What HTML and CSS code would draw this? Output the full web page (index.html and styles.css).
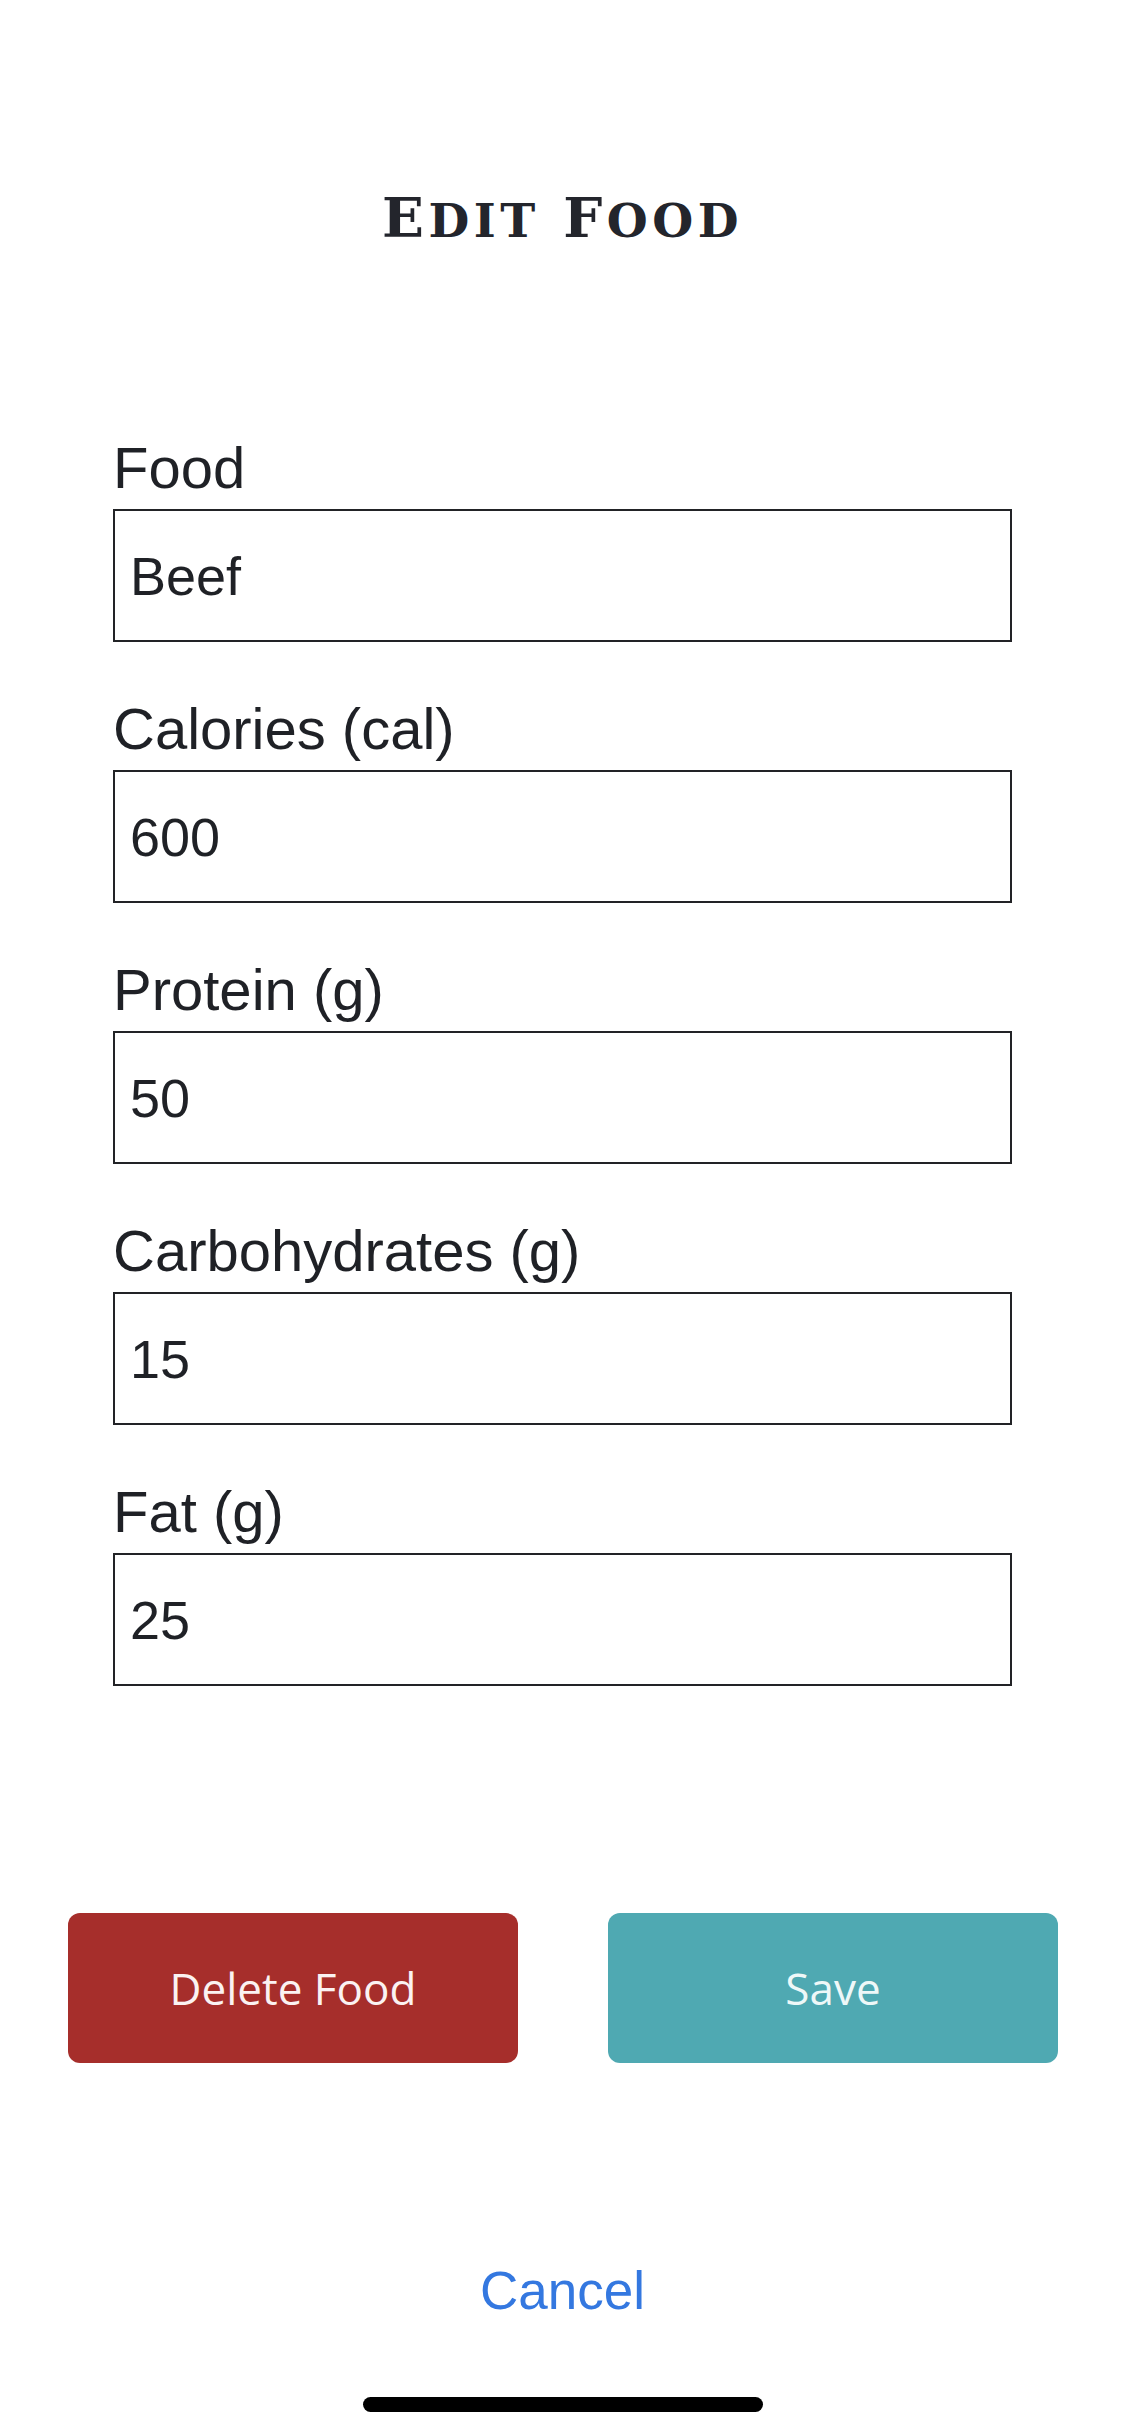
FILE: index.html
```html
<!DOCTYPE html>
<html lang="en">
<head>
<meta charset="utf-8">
<title>Edit Food</title>
<link rel="stylesheet" href="styles.css">
</head>
<body>
<main class="screen">
  <h1 class="title"><span class="cap">E</span><span class="sc">DIT</span> <span class="cap">F</span><span class="sc">OOD</span></h1>

  <form class="form">
    <div class="field">
      <label class="label" for="food">Food</label>
      <input class="input" id="food" type="text" value="Beef">
    </div>
    <div class="field">
      <label class="label" for="cal">Calories (cal)</label>
      <input class="input" id="cal" type="text" value="600">
    </div>
    <div class="field">
      <label class="label" for="protein">Protein (g)</label>
      <input class="input" id="protein" type="text" value="50">
    </div>
    <div class="field">
      <label class="label" for="carbs">Carbohydrates (g)</label>
      <input class="input" id="carbs" type="text" value="15">
    </div>
    <div class="field">
      <label class="label" for="fat">Fat (g)</label>
      <input class="input" id="fat" type="text" value="25">
    </div>
  </form>

  <div class="actions">
    <button class="btn btn-delete" type="button">Delete Food</button>
    <button class="btn btn-save" type="button">Save</button>
  </div>

  <div class="cancel">Cancel</div>

  <div class="home-indicator"></div>
</main>
</body>
</html>
```

FILE: styles.css
```css
html, body {
  margin: 0;
  padding: 0;
  background: #ffffff;
}

.screen {
  width: 1125px;
  height: 2436px;
  display: flex;
  flex-direction: column;
  font-family: "Liberation Sans", Arial, sans-serif;
  color: #1f2126;
  overflow: hidden;
}

.title {
  margin: 188px 0 0 0;
  height: 60px;
  text-align: center;
  font-family: "DejaVu Serif", serif;
  font-weight: bold;
  font-size: 55px;
  line-height: 60px;
  letter-spacing: 4.5px;
  color: #23252c;
}

.title .sc {
  font-size: 47px;
}

.form {
  margin: 188px 113px 0 113px;
  display: flex;
  flex-direction: column;
  gap: 55px;
}

.field {
  display: flex;
  flex-direction: column;
}

.label {
  display: block;
  height: 64px;
  font-size: 58px;
  line-height: 64px;
  margin-bottom: 9px;
  color: #1f2126;
}

.input {
  box-sizing: border-box;
  width: 100%;
  height: 133px;
  margin: 0;
  border: 2px solid #222326;
  border-radius: 0;
  background: #fff;
  padding: 0 15px;
  font-family: "Liberation Sans", Arial, sans-serif;
  font-size: 54px;
  color: #1f2126;
  outline: none;
}

.actions {
  margin: 227px 67px 0 68px;
  display: flex;
  gap: 90px;
}

.btn {
  flex: 1;
  height: 150px;
  border: none;
  border-radius: 12px;
  font-family: "Open Sans", sans-serif;
  font-size: 44px;
  color: #fbf2f2;
  padding: 0;
}

.btn-delete {
  background: #a62e2b;
}

.btn-save {
  background: #4fa9b2;
  color: #eef8f8;
}

.cancel {
  margin-top: 198px;
  height: 60px;
  text-align: center;
  font-size: 53px;
  line-height: 60px;
  color: #3478e0;
}

.home-indicator {
  margin: 76px auto 0 auto;
  width: 400px;
  height: 15px;
  border-radius: 8px;
  background: #000;
}
```
